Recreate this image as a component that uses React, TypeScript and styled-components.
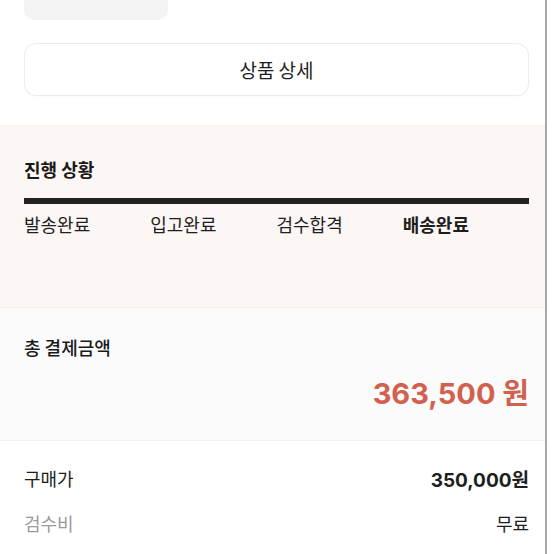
import React from 'react'
import styled, { createGlobalStyle } from 'styled-components'

const GlobalStyle = createGlobalStyle`
  html, body {
    margin: 0;
    padding: 0;
    background: #ffffff;
    overflow: hidden;
  }
  body {
    font-family: "Noto Sans CJK KR", "Noto Sans", sans-serif;
    color: #1e1e1e;
  }
`

const numberFont = `Inter, "Noto Sans CJK KR", sans-serif`

const Page = styled.div`
  width: 547px;
  height: 554px;
  border-right: 2px solid #a8a8a8;
  box-sizing: border-box;
  overflow: hidden;
  background: #ffffff;
`

const Inner = styled.div`
  padding: 0 16px 0 24px;
`

const Thumb = styled.div`
  width: 144px;
  height: 20px;
  background: #f4f4f4;
  border-radius: 0 0 10px 10px;
`

const DetailButton = styled.button`
  display: block;
  width: 100%;
  height: 53px;
  margin: 23px 0 29px;
  border: 1px solid #ebebeb;
  border-radius: 12px;
  background: #ffffff;
  font-family: inherit;
  font-size: 19px;
  color: #1e1e1e;
  box-shadow: 0 1px 2px rgba(0, 0, 0, 0.02);
`

const ProgressSection = styled.section`
  background: #fcf6f5;
  height: 182px;
  padding: 30px 16px 0 24px;
  box-sizing: border-box;
  border-top: 1px solid #f6efee;
`

const SectionTitle = styled.h3<{ weight?: number }>`
  margin: 0;
  font-size: 18px;
  line-height: 26px;
  font-weight: ${props => props.weight ?? 700};
  color: #1a1a1a;
`

const Bar = styled.div`
  height: 6px;
  background: #222222;
  margin-top: 16px;
`

const Steps = styled.div`
  display: grid;
  grid-template-columns: repeat(4, 1fr);
  margin-top: 8px;
`

const Step = styled.span<{ active?: boolean }>`
  font-size: 18px;
  line-height: 24px;
  font-weight: ${props => (props.active ? 700 : 400)};
  color: #1e1e1e;
`

const TotalSection = styled.section`
  background: #fbfbfb;
  height: 134px;
  padding: 26px 16px 0 24px;
  box-sizing: border-box;
  border-top: 1px solid #f3eeee;
  border-bottom: 1px solid #eeeeee;
`

const Amount = styled.div`
  margin-top: 16px;
  text-align: right;
  font-family: ${numberFont};
  font-size: 29px;
  line-height: 36px;
  font-weight: 700;
  color: #d2604f;
`

const Details = styled.div`
  padding: 25px 16px 0 24px;
  display: flex;
  flex-direction: column;
  gap: 21px;
`

const Row = styled.div`
  display: flex;
  justify-content: space-between;
  align-items: center;
  height: 24px;
`

const RowLabel = styled.span<{ muted?: boolean }>`
  font-size: 18px;
  color: ${props => (props.muted ? '#9a9a9a' : '#1e1e1e')};
`

const RowValue = styled.span<{ strong?: boolean }>`
  font-family: ${numberFont};
  font-size: ${props => (props.strong ? 19 : 18)}px;
  font-weight: ${props => (props.strong ? 700 : 400)};
  color: #1e1e1e;
`

const steps = [
  { label: '발송완료' },
  { label: '입고완료' },
  { label: '검수합격' },
  { label: '배송완료', active: true },
]

const App = (): React.ReactElement => {
  return (
    <Page>
      <GlobalStyle />
      <Inner>
        <Thumb />
        <DetailButton>상품 상세</DetailButton>
      </Inner>
      <ProgressSection>
        <SectionTitle>진행 상황</SectionTitle>
        <Bar />
        <Steps>
          {steps.map(s => (
            <Step key={s.label} active={s.active}>{s.label}</Step>
          ))}
        </Steps>
      </ProgressSection>
      <TotalSection>
        <SectionTitle weight={500}>총 결제금액</SectionTitle>
        <Amount>363,500 원</Amount>
      </TotalSection>
      <Details>
        <Row>
          <RowLabel>구매가</RowLabel>
          <RowValue strong>350,000원</RowValue>
        </Row>
        <Row>
          <RowLabel muted>검수비</RowLabel>
          <RowValue>무료</RowValue>
        </Row>
      </Details>
    </Page>
  )
}

export default App
